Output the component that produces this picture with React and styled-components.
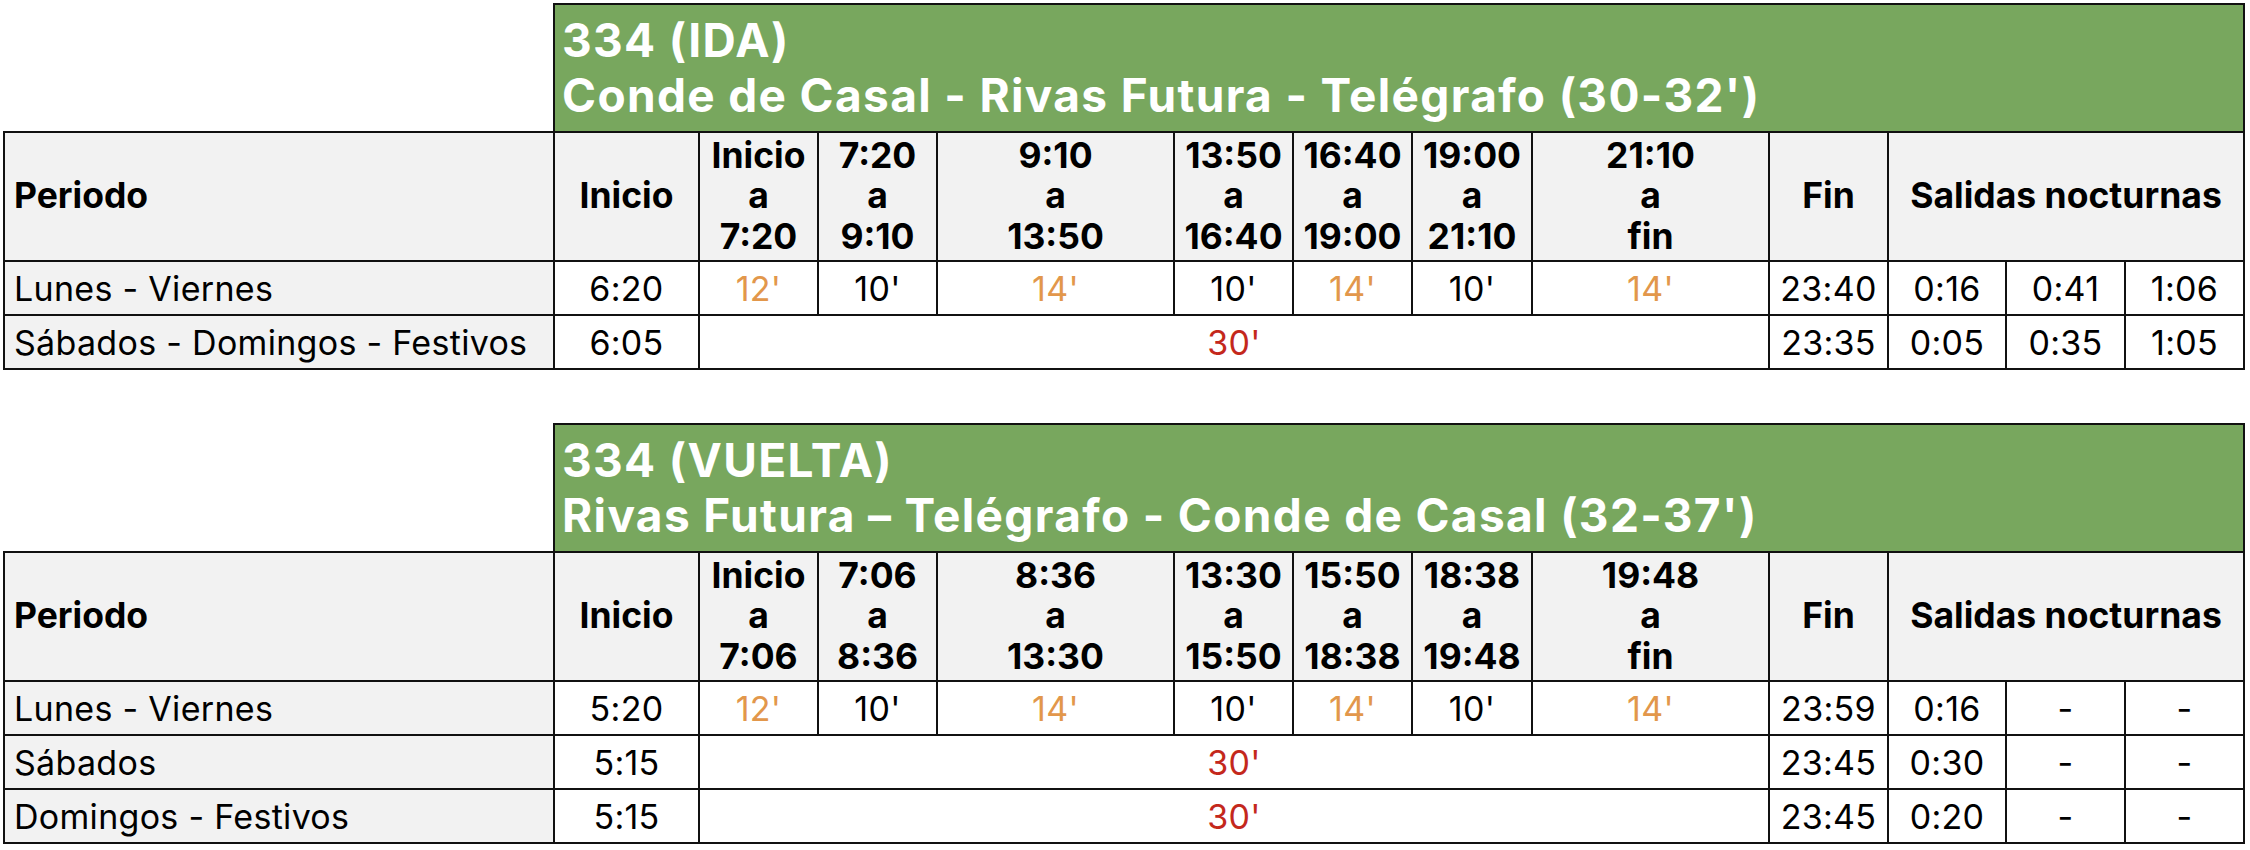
import React from 'react';
import styled, { createGlobalStyle } from 'styled-components';

const GlobalStyle = createGlobalStyle`
  body {
    margin: 0;
    background: #fff;
    color: #000;
    font-family: Inter, "Open Sans", sans-serif;
  }
`;

const COLUMNS =
  '548px 143px 117px 117px 235px 117px 117px 118px 235px 117px 116px 117px 117px';

const WARM = '#e2974b';
const HOT = '#c4281c';

const schedules = [
  {
    id: 'ida',
    line: '334 (IDA)',
    route: "Conde de Casal - Rivas Futura - Telégrafo (30-32')",
    slots: [
      ['Inicio', '7:20'],
      ['7:20', '9:10'],
      ['9:10', '13:50'],
      ['13:50', '16:40'],
      ['16:40', '19:00'],
      ['19:00', '21:10'],
      ['21:10', 'fin'],
    ],
    rows: [
      {
        label: 'Lunes - Viernes',
        start: '6:20',
        freqs: ["12'", "10'", "14'", "10'", "14'", "10'", "14'"],
        end: '23:40',
        night: ['0:16', '0:41', '1:06'],
      },
      {
        label: 'Sábados - Domingos - Festivos',
        start: '6:05',
        flat: "30'",
        end: '23:35',
        night: ['0:05', '0:35', '1:05'],
      },
    ],
  },
  {
    id: 'vuelta',
    line: '334 (VUELTA)',
    route: "Rivas Futura – Telégrafo - Conde de Casal (32-37')",
    slots: [
      ['Inicio', '7:06'],
      ['7:06', '8:36'],
      ['8:36', '13:30'],
      ['13:30', '15:50'],
      ['15:50', '18:38'],
      ['18:38', '19:48'],
      ['19:48', 'fin'],
    ],
    rows: [
      {
        label: 'Lunes - Viernes',
        start: '5:20',
        freqs: ["12'", "10'", "14'", "10'", "14'", "10'", "14'"],
        end: '23:59',
        night: ['0:16', '-', '-'],
      },
      {
        label: 'Sábados',
        start: '5:15',
        flat: "30'",
        end: '23:45',
        night: ['0:30', '-', '-'],
      },
      {
        label: 'Domingos - Festivos',
        start: '5:15',
        flat: "30'",
        end: '23:45',
        night: ['0:20', '-', '-'],
      },
    ],
  },
];

const Timetable = ({ data }) => (
  <Table>
    <TitleRow>
      <Title>
        {data.line}
        <br />
        {data.route}
      </Title>
    </TitleRow>
    <Grid>
      <HeadCell $left>Periodo</HeadCell>
      <HeadCell>Inicio</HeadCell>
      {data.slots.map(([from, to]) => (
        <HeadCell key={from}>
          {from}
          <br />a<br />
          {to}
        </HeadCell>
      ))}
      <HeadCell>Fin</HeadCell>
      <HeadCell $span={3}>Salidas nocturnas</HeadCell>

      {data.rows.map((row) => (
        <React.Fragment key={row.label}>
          <Cell $shade $left>
            {row.label}
          </Cell>
          <Cell>{row.start}</Cell>
          {row.flat ? (
            <Cell $span={7} $color={HOT}>
              {row.flat}
            </Cell>
          ) : (
            row.freqs.map((f, i) => (
              <Cell key={i} $color={f === "10'" ? undefined : WARM}>
                {f}
              </Cell>
            ))
          )}
          <Cell>{row.end}</Cell>
          {row.night.map((n, i) => (
            <Cell key={i}>{n}</Cell>
          ))}
        </React.Fragment>
      ))}
    </Grid>
  </Table>
);

const App = () => (
  <>
    <GlobalStyle />
    <Page>
      {schedules.map((s) => (
        <Timetable key={s.id} data={s} />
      ))}
    </Page>
  </>
);

export default App;

const Page = styled.div`
  width: 2242px;
  padding: 3px 0 0 3px;
  display: flex;
  flex-direction: column;
  gap: 53px;
`;

const Table = styled.section`
  display: flex;
  flex-direction: column;
`;

const TitleRow = styled.div`
  display: grid;
  grid-template-columns: 550px 1fr;
`;

const Title = styled.h2`
  grid-column: 2;
  margin: 0;
  box-sizing: content-box;
  padding: 8px 0 0 7px;
  height: 118px;
  background: #78a75e;
  border: 2px solid #111;
  border-bottom: none;
  color: #fff;
  font-size: 46px;
  font-weight: 700;
  letter-spacing: 1.35px;
  line-height: 55px;
  white-space: nowrap;
`;

const Grid = styled.div`
  display: grid;
  grid-template-columns: ${COLUMNS};
  grid-template-rows: 127px;
  grid-auto-rows: 52px;
  gap: 2px;
  padding: 2px;
  background: #111;
`;

const Cell = styled.div`
  grid-column: span ${(p) => p.$span || 1};
  display: flex;
  align-items: center;
  justify-content: ${(p) => (p.$left ? 'flex-start' : 'center')};
  padding-left: ${(p) => (p.$left ? '9px' : '0')};
  background: ${(p) => (p.$shade ? '#f2f2f2' : '#fff')};
  color: ${(p) => p.$color || '#000'};
  font-size: 34px;
  font-weight: 400;
  letter-spacing: 0.3px;
  white-space: nowrap;
`;

const HeadCell = styled(Cell)`
  background: #f2f2f2;
  text-align: center;
  font-size: 35.5px;
  font-weight: 700;
  letter-spacing: 0;
  line-height: 40.5px;
`;
